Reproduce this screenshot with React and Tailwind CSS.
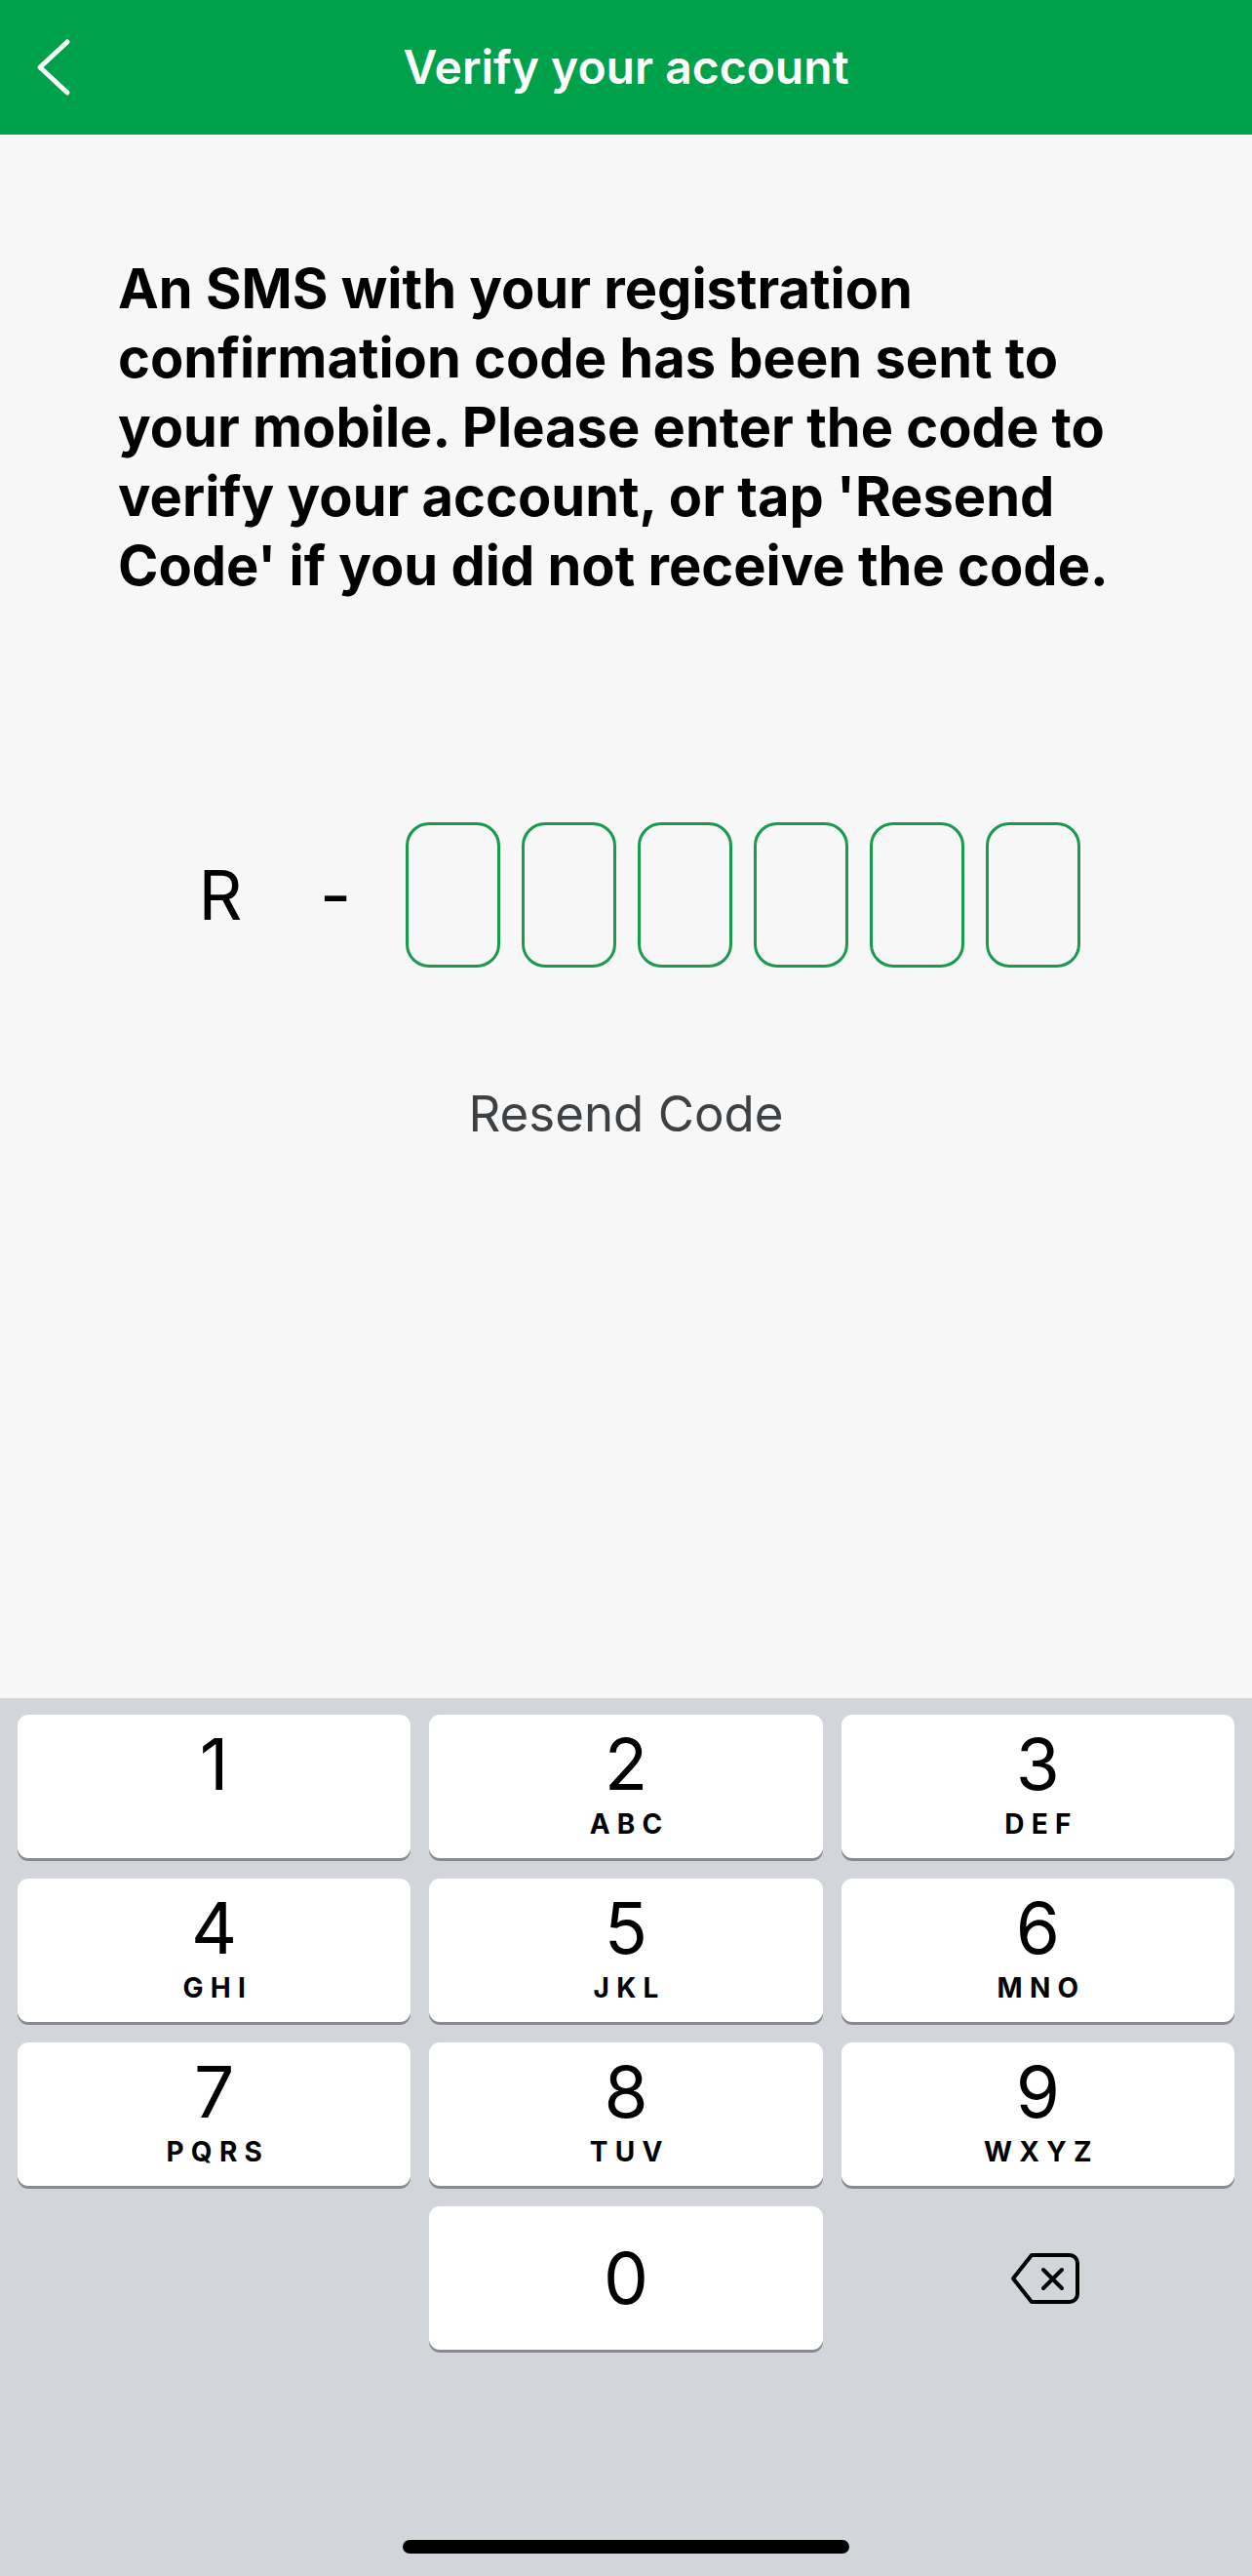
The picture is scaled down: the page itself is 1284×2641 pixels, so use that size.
const KEYS = [
  ['1', ''], ['2', 'ABC'], ['3', 'DEF'],
  ['4', 'GHI'], ['5', 'JKL'], ['6', 'MNO'],
  ['7', 'PQRS'], ['8', 'TUV'], ['9', 'WXYZ'],
]

const FONT = { fontFamily: 'Inter, "Noto Sans", sans-serif' }

function Key({ digit, letters }) {
  return (
    <div className="h-[147px] rounded-[11px] bg-white shadow-[0_3px_0_#898a8e] flex flex-col items-center pt-[14px]">
      <span className="text-[73px] leading-[73px] text-black font-normal">{digit}</span>
      <span className="mt-[11px] text-[28px] leading-[28px] font-bold tracking-[0.26em] pl-[0.26em] text-black">
        {letters}
      </span>
    </div>
  )
}

export default function App() {
  return (
    <div className="h-[2641px] w-full flex flex-col bg-[#f7f7f7]" style={FONT}>
      {/* header */}
      <div className="h-[138px] bg-[#00a14b] grid grid-cols-[1fr_auto_1fr] items-center">
        <div className="pl-[34px] flex items-center">
          <svg width="40" height="64" viewBox="0 0 40 64" fill="none">
            <polyline points="35,6 7,32 35,58" stroke="white" strokeWidth="5" strokeLinecap="round" strokeLinejoin="round" />
          </svg>
        </div>
        <h1 className="text-[48px] font-semibold text-white">Verify your account</h1>
        <div />
      </div>

      {/* body */}
      <div className="flex-1 flex flex-col">
        <p className="pt-[123px] pl-[121px] pr-[112px] text-[56px] leading-[71px] font-bold text-black">
          An SMS with your registration confirmation code has been sent to your mobile. Please enter the code to verify your account, or tap 'Resend Code' if you did not receive the code.
        </p>

        <div className="mt-[227px] flex items-center pl-[187px]">
          <span className="w-[78px] text-center text-[70px] leading-none text-black">R</span>
          <span className="ml-[40px] w-[78px] text-center text-[70px] leading-none text-black">-</span>
          <div className="ml-[33px] flex gap-[22px]">
            {[0, 1, 2, 3, 4, 5].map(i => (
              <div key={i} className="w-[97px] h-[149px] rounded-[24px] border-[3px] border-[#1a9a4f]" />
            ))}
          </div>
        </div>

        <button className="mt-[119px] self-center text-[51px] leading-[62px] text-[#3d4144]">Resend Code</button>
      </div>

      {/* keypad */}
      <div className="h-[900px] bg-[#d2d5da] flex flex-col pt-[17px]">
        <div className="grid grid-cols-3 gap-x-[19px] gap-y-[21px] px-[18px]">
          {KEYS.map(([d, l]) => <Key key={d} digit={d} letters={l} />)}
          <div />
          <div className="h-[147px] rounded-[11px] bg-white shadow-[0_3px_0_#898a8e] flex items-center justify-center">
            <span className="text-[73px] leading-[73px] text-black">0</span>
          </div>
          <div className="h-[147px] flex items-center justify-center pl-[16px]">
            <svg width="72" height="54" viewBox="0 0 72 54" fill="none" stroke="black" strokeWidth="4" strokeLinecap="round" strokeLinejoin="round">
              <path d="M22 3 H61 a8 8 0 0 1 8 8 V43 a8 8 0 0 1 -8 8 H22 L3 27 Z" />
              <path d="M34 18 L53 37 M53 18 L34 37" />
            </svg>
          </div>
        </div>
        <div className="mt-auto mb-[23px] self-center w-[458px] h-[14px] rounded-full bg-black" />
      </div>
    </div>
  )
}
